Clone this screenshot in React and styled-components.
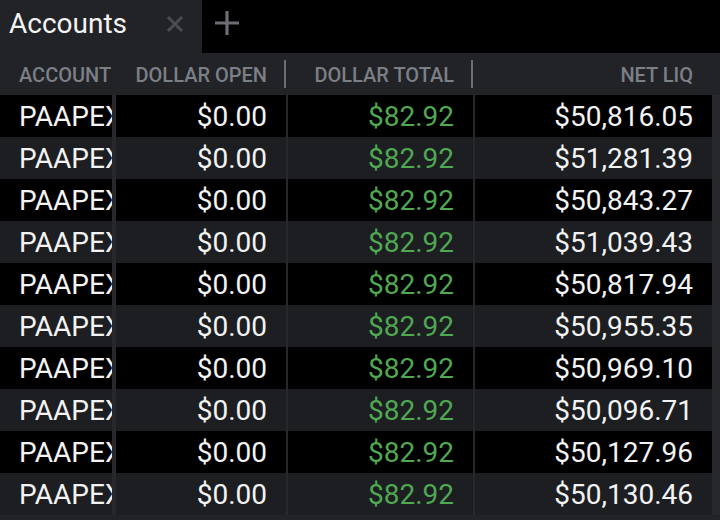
import React from 'react'
import styled, { createGlobalStyle } from 'styled-components'

const GlobalStyle = createGlobalStyle`
  html, body {
    margin: 0;
    padding: 0;
    background: #222327;
  }
  body {
    font-family: Roboto, "Liberation Sans", sans-serif;
  }
`

const COLUMNS = '114px 170px 185px 237px'

const Panel = styled.div`
  width: 720px;
  height: 520px;
  overflow: hidden;
  background: #222327;
`

const TabBar = styled.div`
  display: flex;
  align-items: stretch;
  height: 53px;
  background: #000;
`

const Tab = styled.div`
  display: flex;
  align-items: center;
  width: 202px;
  box-sizing: border-box;
  padding: 0 18px 6px 9px;
  background: #222327;
  color: #f4f4f4;
  font-size: 28px;
  .label {
    flex: 1;
  }
`

const IconButton = styled.button`
  display: flex;
  align-items: center;
  justify-content: center;
  padding: 0;
  border: none;
  background: none;
  margin: ${p => p.$margin || '0'};
  cursor: pointer;
`

const Grid = styled.div`
  display: grid;
  grid-template-columns: ${COLUMNS};
  column-gap: 2px;
  height: 42px;
  background: ${p => p.$bg || '#27282c'};
  padding-right: 8px;
`

const HeadCell = styled.div`
  position: relative;
  display: flex;
  align-items: center;
  justify-content: ${p => (p.$left ? 'flex-start' : 'flex-end')};
  padding: 2px 19px 0;
  color: #7b7f86;
  font-size: 20px;
  font-weight: 500;
  white-space: nowrap;
  overflow: hidden;
  &::after {
    content: '';
    display: ${p => (p.$divider ? 'block' : 'none')};
    position: absolute;
    right: 0;
    top: 7px;
    bottom: 7px;
    width: 2px;
    background: #6a6d73;
  }
`

const Cell = styled.div`
  display: flex;
  align-items: center;
  justify-content: ${p => (p.$left ? 'flex-start' : 'flex-end')};
  margin-right: ${p => (p.$first ? '2px' : '0')};
  padding: 0 ${p => (p.$left ? '0' : '19px')} 0 ${p => (p.$left ? '19px' : '0')};
  background: ${p => (p.$odd ? '#1d1e22' : '#000')};
  color: ${p => (p.$positive ? '#4fa852' : '#f3f3f3')};
  font-size: 28px;
  white-space: nowrap;
  overflow: hidden;
`

const accounts = [
  '$50,816.05',
  '$51,281.39',
  '$50,843.27',
  '$51,039.43',
  '$50,817.94',
  '$50,955.35',
  '$50,969.10',
  '$50,096.71',
  '$50,127.96',
  '$50,130.46',
]

function CloseIcon() {
  return (
    <svg width="18" height="18" viewBox="0 0 18 18">
      <path d="M2 2 L16 16 M16 2 L2 16" stroke="#4b4c51" strokeWidth="3" />
    </svg>
  )
}

function PlusIcon() {
  return (
    <svg width="26" height="26" viewBox="0 0 26 26">
      <path d="M13 1 V25 M1 13 H25" stroke="#6c6e73" strokeWidth="3.2" />
    </svg>
  )
}

export default function App() {
  return (
    <Panel>
      <GlobalStyle />
      <TabBar>
        <Tab>
          <span className="label">Accounts</span>
          <IconButton aria-label="close tab">
            <CloseIcon />
          </IconButton>
        </Tab>
        <IconButton aria-label="new tab" $margin="0 0 8px 12px">
          <PlusIcon />
        </IconButton>
      </TabBar>

      <Grid $bg="#222327">
        <HeadCell $left>ACCOUNT</HeadCell>
        <HeadCell $divider>DOLLAR OPEN</HeadCell>
        <HeadCell $divider>DOLLAR TOTAL</HeadCell>
        <HeadCell>NET LIQ</HeadCell>
      </Grid>

      {accounts.map((netLiq, i) => (
        <Grid key={i}>
          <Cell $left $first $odd={i % 2 === 1}>PAAPEX</Cell>
          <Cell $odd={i % 2 === 1}>$0.00</Cell>
          <Cell $odd={i % 2 === 1} $positive>$82.92</Cell>
          <Cell $odd={i % 2 === 1}>{netLiq}</Cell>
        </Grid>
      ))}
    </Panel>
  )
}
